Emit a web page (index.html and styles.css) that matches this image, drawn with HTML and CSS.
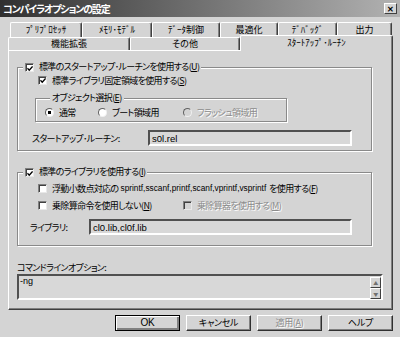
FILE: index.html
```html
<!DOCTYPE html>
<html lang="ja">
<head>
  <meta charset="UTF-8" />
  <title>コンパイラオプションの設定</title>
  <link rel="stylesheet" href="styles.css">
</head>
<body>
  <div class="titlebar">
    <span class="title">コンパイラオプションの設定</span>
    <span class="close">✕</span>
  </div>

  <div class="tabs">
    <div class="tabrow row1">
      <div class="tab t-pre">ﾌﾟﾘﾌﾟﾛｾｯｻ</div>
      <div class="tab t-mem">ﾒﾓﾘ･ﾓﾃﾞﾙ</div>
      <div class="tab t-data">ﾃﾞｰﾀ制御</div>
      <div class="tab t-opt">最適化</div>
      <div class="tab t-dbg">ﾃﾞﾊﾞｯｸﾞ</div>
      <div class="tab t-out">出力</div>
    </div>
    <div class="tabrow row2">
      <div class="tab t-ext">機能拡張</div>
      <div class="tab t-etc">その他</div>
      <div class="tab t-start selected">ｽﾀｰﾄｱｯﾌﾟ･ﾙｰﾁﾝ</div>
    </div>
  </div>

  <div class="panel">
    <fieldset class="group">
      <legend><span class="check on"><svg width="7" height="7" viewBox="0 0 7 7"><path d="M0.5 3.2 L2.6 5.4 L6.5 1" fill="none" stroke="#000" stroke-width="1.6"/></svg></span>標準のスタートアップ･ルーチンを使用する(<u>U</u>)</legend>

      <div class="row sub">
        <span class="check on"><svg width="7" height="7" viewBox="0 0 7 7"><path d="M0.5 3.2 L2.6 5.4 L6.5 1" fill="none" stroke="#000" stroke-width="1.6"/></svg></span>標準ライブラリ固定領域を使用する(<u>S</u>)
      </div>

      <fieldset class="objgroup">
        <legend>オブジェクト選択(<u>E</u>)</legend>
        <div class="row radios">
          <span class="opt opt-normal"><span class="radio on"></span>通常</span>
          <span class="opt opt-boot"><span class="radio"></span>ブート領域用</span>
          <span class="opt disabled"><span class="radio"></span>フラッシュ領域用</span>
        </div>
      </fieldset>

      <div class="row field startup">
        <span class="label lbl-startup">スタートアップ･ルーチン：</span>
        <span class="input in-startup">s0l.rel</span>
      </div>
    </fieldset>

    <fieldset class="group group-lib">
      <legend><span class="check on"><svg width="7" height="7" viewBox="0 0 7 7"><path d="M0.5 3.2 L2.6 5.4 L6.5 1" fill="none" stroke="#000" stroke-width="1.6"/></svg></span>標準のライブラリを使用する(<u>I</u>)</legend>

      <div class="row sub first">
        <span class="check"></span>浮動小数点対応の <span class="latin">sprintf,sscanf,printf,scanf,vprintf,vsprintf</span> を使用する(<u>F</u>)
      </div>
      <div class="row sub second">
        <span class="opt opt-muldiv"><span class="check"></span>乗除算命令を使用しない(<u>N</u>)</span>
        <span class="opt disabled"><span class="check"></span>乗除算器を使用する(<u>M</u>)</span>
      </div>

      <div class="row field library">
        <span class="label lbl-lib">ライブラリ：</span>
        <span class="input in-lib">cl0.lib,cl0f.lib</span>
      </div>
    </fieldset>

    <div class="cmd-label">コマンドラインオプション:</div>
    <div class="cmdbox">
      <span class="cmdtext">-ng</span>
      <div class="scroll">
        <span class="sbtn">▲</span>
        <span class="sbtn">▼</span>
      </div>
    </div>
  </div>

  <div class="buttons">
    <button class="btn default">OK</button>
    <button class="btn">キャンセル</button>
    <button class="btn disabled">適用(<u>A</u>)</button>
    <button class="btn">ヘルプ</button>
  </div>
</body>
</html>
```

FILE: styles.css
```css
body {
  margin: 0;
  width: 400px;
  height: 337px;
  overflow: hidden;
  background-color: #d4d4d4;
  font-family: "Noto Sans CJK JP", sans-serif;
  font-size: 9px;
  letter-spacing: -0.65px;
  font-feature-settings: "palt" 1;
  font-variant-east-asian: proportional-width;
  color: #000;
}
u {
  text-decoration-thickness: 1px;
  text-underline-offset: 1px;
}

/* title bar */
.titlebar {
  height: 17px;
  background: linear-gradient(to right, #303030, #b2b2b2);
  display: flex;
  align-items: center;
  justify-content: space-between;
  padding: 0 3px 0 3px;
}
.title {
  color: #fff;
  font-weight: bold;
  font-size: 10px;
  letter-spacing: -1.2px;
}
.close {
  width: 13px;
  height: 11px;
  box-sizing: border-box;
  background-color: #d4d4d4;
  border: 1px solid;
  border-color: #fff #404040 #404040 #fff;
  font-size: 8px;
  font-weight: bold;
  letter-spacing: 0;
  line-height: 9px;
  text-align: center;
}

/* tabs */
.tabs {
  padding-top: 5px;
}
.tabrow {
  display: flex;
}
.row1 {
  height: 15px;
  margin-left: 10px;
}
.row2 {
  height: 13px;
  margin-left: 8px;
}
.tab {
  box-sizing: border-box;
  border-left: 1px solid #fff;
  border-top: 1px solid #fff;
  border-right: 1px solid #404040;
  box-shadow: inset -1px 0 0 #808080;
  border-radius: 2px 2px 0 0;
  text-align: center;
  line-height: 12px;
  letter-spacing: 0;
}
.row1 .tab {
  padding-top: 1px;
}
.t-pre { width: 72px; }
.t-mem { width: 70px; }
.t-data { width: 68px; }
.t-opt { width: 58px; }
.t-dbg { width: 59px; }
.t-out { width: 55px; }
.t-ext { width: 122px; }
.t-etc { width: 110px; }
.t-start { width: 153px; }
.tab.selected {
  position: relative;
  z-index: 1;
  height: 16px;
  margin-top: -2px;
  padding-top: 1px;
  background-color: #d4d4d4;
}

/* panel */
.panel {
  box-sizing: border-box;
  width: 385px;
  height: 260px;
  margin-left: 8px;
  padding: 10px 0 0 8px;
  border: 1px solid;
  border-color: #fff #404040 #404040 #fff;
  box-shadow: inset -1px -1px 0 #808080;
}
.group {
  margin: 0 20px 0 0;
  padding: 0;
  min-width: 0;
  border: 1px solid #8a8a8a;
  box-shadow: 1px 1px 0 #fff, inset 1px 1px 0 #fff;
}
.group legend,
.objgroup legend {
  margin-left: 5px;
  padding: 0 2px;
  line-height: 12px;
  background-color: #d4d4d4;
}
.group-lib {
  margin-top: 15px;
}
.row {
  display: flex;
  align-items: center;
  height: 12px;
  white-space: nowrap;
}
.sub {
  margin: 1px 0 0 20px;
}
.sub.first {
  margin-top: 4px;
}
.sub.second {
  margin-top: 5px;
}
.check {
  display: inline-flex;
  align-items: center;
  justify-content: center;
  box-sizing: border-box;
  width: 9px;
  height: 9px;
  margin-right: 5px;
  background-color: #fff;
  border: 1px solid;
  border-color: #808080 #e8e8e8 #e8e8e8 #808080;
  box-shadow: inset 1px 1px 0 #404040;
  vertical-align: middle;
}
.check svg {
  margin: 1px 0 0 1px;
}
.radio {
  display: inline-block;
  box-sizing: border-box;
  width: 9px;
  height: 9px;
  margin-right: 5px;
  border-radius: 50%;
  background-color: #fff;
  border: 1px solid;
  border-color: #606060 #f0f0f0 #f0f0f0 #606060;
}
.radio.on {
  background: radial-gradient(circle, #000 0 1.6px, #fff 2px);
}
.disabled {
  color: #8c8c8c;
  text-shadow: 1px 1px 0 #fff;
}
.disabled .check,
.disabled .radio {
  background-color: #d4d4d4;
}

.objgroup {
  box-sizing: border-box;
  width: 252px;
  margin: 6px 0 0 17px;
  padding: 2px 0 3px 9px;
  border: 1px solid #8a8a8a;
  box-shadow: 1px 1px 0 #fff, inset 1px 1px 0 #fff;
}
.opt {
  display: inline-flex;
  align-items: center;
}
.opt-normal { width: 53px; }
.opt-boot { width: 85px; }
.opt-muldiv { width: 145px; }

.latin {
  font-family: "Liberation Sans", Arial, sans-serif;
  font-size: 8.3px;
  letter-spacing: 0;
  margin: 0 3px 0 2px;
}

.field {
  height: 16px;
}
.startup {
  margin: 8px 0 4px 14px;
}
.library {
  margin: 8px 0 10px 12px;
}
.lbl-startup { width: 116px; }
.lbl-lib { width: 59px; }
.input {
  box-sizing: border-box;
  height: 16px;
  padding: 1px 2px;
  border: 2px solid;
  border-color: #505050 #fff #fff #505050;
  background-color: #d8d8d8;
  font-family: "Liberation Sans", Arial, sans-serif;
  font-size: 9.5px;
  letter-spacing: 0;
  line-height: 11px;
}
.in-startup { width: 204px; }
.in-lib { width: 263px; }

.cmd-label {
  margin-top: 16px;
  line-height: 12px;
}
.cmdbox {
  box-sizing: border-box;
  width: 366px;
  height: 26px;
  display: flex;
  justify-content: space-between;
  border: 2px solid;
  border-color: #505050 #fff #fff #505050;
  background-color: #d8d8d8;
}
.cmdtext {
  font-family: "Liberation Sans", Arial, sans-serif;
  font-size: 9px;
  letter-spacing: 0;
  line-height: 10px;
  padding-left: 1px;
}
.scroll {
  display: flex;
  flex-direction: column;
  width: 11px;
  margin: 1px 0 0 0;
}
.sbtn {
  box-sizing: border-box;
  height: 11px;
  border: 1px solid;
  border-color: #fff #404040 #404040 #fff;
  background-color: #d4d4d4;
  color: #707070;
  font-size: 5px;
  line-height: 9px;
  text-align: center;
}

/* buttons */
.buttons {
  display: flex;
  justify-content: flex-end;
  gap: 6px;
  margin-top: 5px;
  padding-right: 7px;
}
.btn {
  box-sizing: border-box;
  width: 65px;
  height: 16px;
  padding: 0;
  font-family: "Noto Sans CJK JP", sans-serif;
  font-size: 9px;
  letter-spacing: -0.3px;
  font-feature-settings: "palt" 1;
  line-height: 12px;
  background-color: #d4d4d4;
  color: #000;
  border: 1px solid;
  border-color: #fff #303030 #303030 #fff;
  box-shadow: inset -1px -1px 0 #808080;
}
.btn.default {
  border: 1px solid #000;
  box-shadow: inset 1px 1px 0 #fff, inset -2px -2px 0 #808080;
  font-family: "Liberation Sans", Arial, sans-serif;
  font-size: 10px;
}
.btn.disabled {
  color: #8c8c8c;
  text-shadow: 1px 1px 0 #fff;
}
```
